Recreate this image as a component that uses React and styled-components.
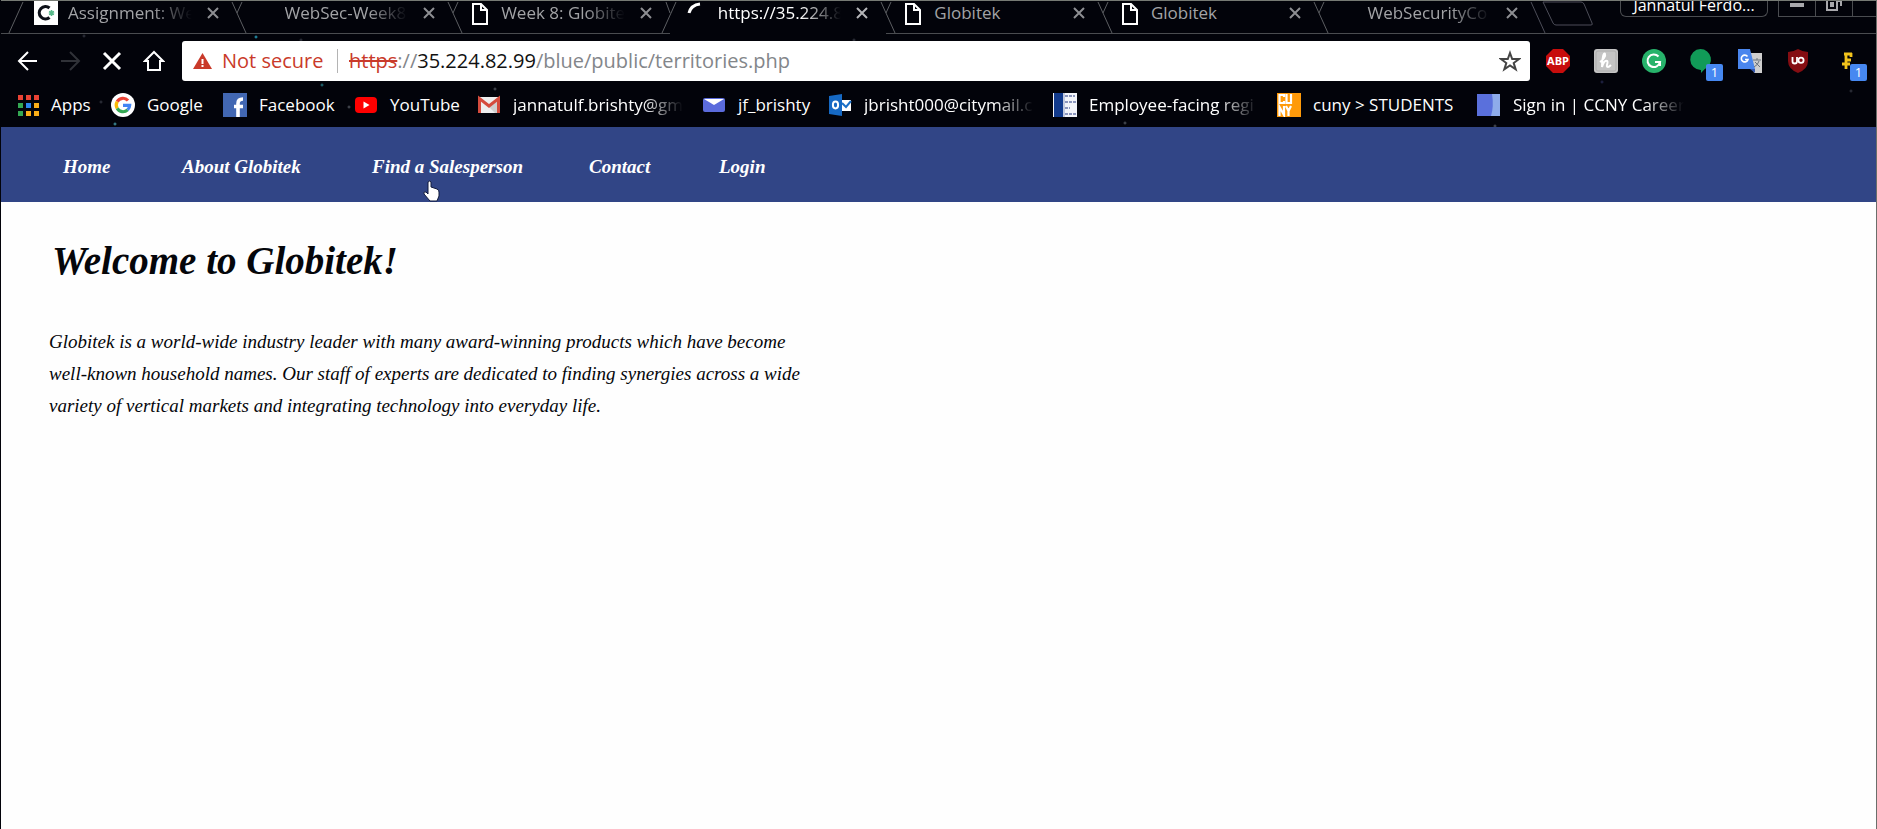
import React from "react";
import styled, { createGlobalStyle, css } from "styled-components";

const UI = `"Open Sans", "Noto Sans", sans-serif`;
const SCRIPT = `"Liberation Serif", serif`;

const Global = createGlobalStyle`
  * { box-sizing: border-box; }
  body { margin: 0; background: #fefefe; font-family: ${UI}; }
  button { font: inherit; color: inherit; background: none; border: 0; padding: 0; }
  a { color: inherit; text-decoration: none; }
`;

const Window = styled.div`
  min-height: 100vh;
  border-left: 1px solid #02030a;
  border-right: 1px solid #6b6f6b;
  overflow: hidden;
`;

const dot = (x, y, c) => `radial-gradient(circle 2px at ${x}px ${y}px, ${c} 0, transparent 100%)`;

const Chrome = styled.header`
  border-top: 1px solid #767a74;
  color: #fff;
  background: ${[
    dot(255, 36, "#2cc0e0"), dot(321, 84, "#2a8a96"), dot(114, 123, "#4fb6c4"), dot(494, 88, "#5b6068"),
    dot(348, 106, "#5b6068"), dot(100, 101, "#3a3d48"), dot(83, 35, "#3a3d48"), dot(300, 39, "#3a3d48"),
    dot(853, 39, "#3a3d48"), dot(1124, 122, "#5b6068"), dot(1494, 125, "#5b6068"), dot(1850, 90, "#3a3d48"),
    dot(1601, 81, "#2a2d58"),
  ].join(",")}, #02030a;
`;

const TabStrip = styled.div`
  display: flex;
  height: 33px;
  padding-left: 19px;
  background: linear-gradient(#4a4c50, #4a4c50) bottom left / 100% 1px no-repeat;
`;

const Tabs = styled.div`
  display: flex;
  flex: 0 1 1516px;
  min-width: 0;
`;

const Tab = styled.div`
  display: flex;
  flex: 1 1 0;
  min-width: 0;
  height: 33px;
  color: ${p => (p.$active ? "#fff" : "#a2a3a6")};
  background: ${p => (p.$active ? "#02030a" : "transparent")};
`;

const Slant = styled.svg`
  flex: none;
  width: 14px;
  height: 33px;
  overflow: visible;
  fill: none;
  stroke: #5c5e62;
`;

const TabIcon = styled.span`
  flex: none;
  width: 24px;
  height: 24px;
  svg { display: block; }
`;

const fade = css`
  mask-image: linear-gradient(90deg, #000 calc(100% - 40px), transparent);
`;

const TabTitle = styled.span`
  flex: 1 1 auto;
  min-width: 0;
  margin-left: 10px;
  overflow: hidden;
  white-space: nowrap;
  font-size: 17px;
  line-height: 24px;
  ${p => p.$fade && fade}
`;

const TabClose = styled.button`
  flex: none;
  width: 12px;
  height: 24px;
  margin: 0 18px 0 15px;
  color: ${p => (p.$active ? "#b4b5b8" : "#8d8e92")};
  svg { display: block; }
`;

const NewTab = styled.button`
  flex: none;
  width: 70px;
  height: 33px;
  svg { display: block; overflow: visible; }
`;

const WindowControls = styled.div`
  display: flex;
  align-items: flex-start;
  margin-left: auto;
`;

const Profile = styled.button`
  width: 148px;
  height: 16px;
  margin-right: 10px;
  border: 1px solid #4a4c50;
  border-top: 0;
  border-radius: 0 0 6px 6px;
  overflow: hidden;
  font-size: 16px;
  line-height: 16px;
  display: flex;
  align-items: flex-end;
  justify-content: center;
  span { display: block; line-height: 22px; }
`;

const ControlButton = styled.button`
  display: flex;
  justify-content: center;
  width: ${p => p.$w}px;
  height: 16px;
  border-left: 1px solid #4a4c50;
  border-bottom: 1px solid #4a4c50;
`;

const Toolbar = styled.div`
  display: flex;
  align-items: center;
  height: 54px;
  padding: 0 6px;
`;

const ToolButton = styled.button`
  display: grid;
  place-items: center;
  flex: none;
  width: 42px;
  height: 40px;
  color: ${p => (p.$dim ? "#303238" : "#fff")};
`;

const Address = styled.div`
  display: flex;
  align-items: center;
  flex: 1;
  min-width: 0;
  height: 40px;
  margin: 0 4px 0 7px;
  padding: 0 9px 0 11px;
  border-radius: 3px;
  background: #fff;
  font-size: 20px;
  line-height: 28px;
  white-space: nowrap;
`;

const NotSecure = styled.span`
  width: 115px;
  margin-left: 10px;
  color: #c93a2a;
`;

const Url = styled.span`
  flex: 1;
  padding-left: 11px;
  border-left: 1px solid #b4b4b4;
  line-height: 24px;
  color: #83868a;
  s { color: #c93a2a; }
  b { font-weight: 400; color: #111; }
`;

const Extensions = styled.div`
  display: flex;
`;

const Extension = styled.button`
  position: relative;
  display: grid;
  place-items: center;
  width: 48px;
  height: 40px;
`;

const Badge = styled.span`
  position: absolute;
  right: 3px;
  bottom: 0;
  width: 17px;
  height: 17px;
  border-radius: 2px;
  background: #4688f1;
  color: #fff;
  font-size: 13px;
  line-height: 17px;
  text-align: center;
`;

const Bookmarks = styled.nav`
  display: flex;
  height: 39px;
  padding-left: 14px;
  gap: 19px;
`;

const Bookmark = styled.a`
  display: flex;
  align-items: center;
  flex: none;
  height: 34px;
  svg { flex: none; margin-right: 12px; }
`;

const BookmarkLabel = styled.span`
  width: ${p => p.$w}px;
  overflow: ${p => (p.$fade ? "hidden" : "visible")};
  white-space: nowrap;
  font-size: 17px;
  line-height: 26px;
  ${p => p.$fade && fade}
`;

const SiteNav = styled.nav`
  display: flex;
  align-items: center;
  gap: 71px;
  height: 75px;
  padding: 4px 62px 0;
  background: #314586;
  color: #fff;
  font: italic bold 19px/32px ${SCRIPT};
`;

const NavLink = styled.a`
  position: relative;
  white-space: nowrap;
  width: ${p => p.$w}px;
`;

const Pointer = styled.svg`
  position: absolute;
  left: 50px;
  top: 29px;
`;

const Main = styled.main`
  padding: 33px 48px;
  color: #05060a;
  font-family: ${SCRIPT};
  font-style: italic;
`;

const Title = styled.h1`
  margin: 0;
  padding-left: 3px;
  font-size: 39px;
  line-height: 52px;
`;

const Intro = styled.p`
  max-width: 760px;
  margin: 39px 0 0;
  font-size: 19px;
  line-height: 32px;
`;

const FileIcon = () => (
  <svg width="24" height="24" viewBox="0 0 24 24" fill="none" stroke="#fff" strokeWidth="2">
    <path d="M6 3h8l6 6v14H6z M14 3v6h6" />
  </svg>
);

const CIcon = () => (
  <svg width="24" height="24" viewBox="0 0 24 24">
    <path fill="#fff" d="M0 0h24v24H0z" />
    <path d="M15.500 7A6.200 6.200 0 1 0 15.500 16.500" fill="none" stroke="#0c1018" strokeWidth="3.200" />
    <path d="M17.500 9v6M15 10.500l5 3M15 13.500l5-3" stroke="#58b98a" strokeWidth="1.600" />
  </svg>
);

const Spinner = () => (
  <svg width="24" height="24" viewBox="0 0 24 24" fill="none" stroke="#fff" strokeWidth="3">
    <path d="M5 12Q7 4 16 3" />
  </svg>
);

const TABS = [
  { title: "Assignment: We", icon: <CIcon />, fade: true },
  { title: "WebSec-Week8", fade: true },
  { title: "Week 8: Globite", icon: <FileIcon />, fade: true },
  { title: "https://35.224.8", icon: <Spinner />, fade: true, active: true },
  { title: "Globitek", icon: <FileIcon /> },
  { title: "Globitek", icon: <FileIcon /> },
  { title: "WebSecurityCo", fade: true },
];

const slantPath = i =>
  i === 0 ? "M3 1L-11 32" : i === 3 ? "M6 1L-8 32M-4 1L0 12" : "M-5 1L9 32M5 1L0 12";

const G = ({ size = 24 }) => (
  <svg width={size} height={size} viewBox="0 0 24 24">
    <circle cx="12" cy="12" r="12" fill="#fff" />
    <g fill="none" strokeWidth="3.200">
      <path d="M6.200 8.600A6.700 6.700 0 0 1 17 7.500" stroke="#ea4335" />
      <path d="M6.200 15.400A6.700 6.700 0 0 1 6.200 8.600" stroke="#fbbc05" />
      <path d="M16.600 16.900A6.700 6.700 0 0 1 6.200 15.400" stroke="#34a853" />
      <path d="M12 12.300H18.700A6.700 6.700 0 0 1 16.600 16.900" stroke="#4285f4" />
    </g>
  </svg>
);

const AppsIcon = () => (
  <svg width="24" height="24" viewBox="0 0 24 24">
    {["#ea4335", "#ea4335", "#ea4335", "#34a853", "#2a85f0", "#fbae17", "#34a853", "#fbae17", "#fbae17"].map((c, i) => (
      <rect key={i} x={3 + (i % 3) * 8} y={2 + Math.floor(i / 3) * 8} width="5" height="5" fill={c} />
    ))}
  </svg>
);

const BOOKMARKS = [
  { label: "Apps", w: 41, icon: <AppsIcon /> },
  { label: "Google", w: 57, icon: <G /> },
  {
    label: "Facebook", w: 76,
    icon: (
      <svg width="24" height="24" viewBox="0 0 24 24">
        <path fill="#4267b2" d="M0 0h24v24H0z" />
        <path d="M15 24V10.500Q15 6 20 6M11 13.500H20" stroke="#fff" strokeWidth="3.600" fill="none" />
      </svg>
    ),
  },
  {
    label: "YouTube", w: 68,
    icon: (
      <svg width="24" height="24" viewBox="0 0 24 24">
        <rect x="1" y="4" width="22" height="16" rx="4" fill="#f00" />
        <path d="M9.500 8.500v7l6-3.500z" fill="#fff" />
      </svg>
    ),
  },
  {
    label: "jannatulf.brishty@gm", w: 170, fade: true,
    icon: (
      <svg width="24" height="24" viewBox="0 0 24 24">
        <path fill="#eee" d="M1 4h22v16H1z" />
        <path fill="#cfcfcf" d="M12 14l8-7v13h-2z" />
        <path d="M2.500 20V5.500L12 13l9.500-7.500V20" fill="none" stroke="#d54b3d" strokeWidth="3" />
      </svg>
    ),
  },
  {
    label: "jf_brishty", w: 71,
    icon: (
      <svg width="24" height="24" viewBox="0 0 24 24">
        <rect x="1" y="5" width="22" height="14" rx="2" fill="#5b6bdc" />
        <path d="M2 6h20l-10 6z" fill="#fff" />
      </svg>
    ),
  },
  {
    label: "jbrisht000@citymail.c", w: 170, fade: true,
    icon: (
      <svg width="24" height="24" viewBox="0 0 24 24">
        <path fill="#fff" d="M12 7h11v11H12z" />
        <path d="M14 10l4 4 5-6" fill="none" stroke="#1a70c8" strokeWidth="2" />
        <path fill="#1669c4" d="M1 3l13-2v22L1 21z" />
        <ellipse cx="7.500" cy="12" rx="2.600" ry="3.400" fill="none" stroke="#fff" strokeWidth="2" />
      </svg>
    ),
  },
  {
    label: "Employee-facing regi", w: 169, fade: true,
    icon: (
      <svg width="24" height="24" viewBox="0 0 24 24">
        <path fill="#f4f5fa" d="M0 0h24v24H0z" />
        <path fill="#123a8c" d="M1 0h9v24H1z" />
        <path fill="#c3cade" d="M10 0h2v24h-2z" />
        <path d="M12 3h7m1 0h2M12 9h12M12 15h5M12 21h12" stroke="#8c96bd" strokeWidth="2" strokeDasharray="3 1" />
      </svg>
    ),
  },
  {
    label: "cuny > STUDENTS", w: 145,
    icon: (
      <svg width="24" height="24" viewBox="0 0 24 24">
        <path fill="#ff9a0a" d="M0 0h24v24H0z" />
        <g fill="none" stroke="#fff" strokeWidth="2.200">
          <path d="M7 4V2H2.500v8H7V8M9.500 1v9H14V1M2.500 23v-9L7 22v-9M9 13l2.500 5L14 13M11.500 18v5" />
        </g>
      </svg>
    ),
  },
  {
    label: "Sign in | CCNY Career", w: 171, fade: true,
    icon: (
      <svg width="24" height="24" viewBox="0 0 24 24">
        <path fill="#5a70dc" d="M0 1h23v22H0z" />
        <path fill="#8eabea" d="M15 1h8v22h-9q3-10 1-22z" />
      </svg>
    ),
  },
];

const EXTENSIONS = [
  {
    name: "Adblock Plus",
    icon: (
      <svg width="24" height="24" viewBox="0 0 24 24">
        <path d="M7 0h10l7 7v10l-7 7H7l-7-7V7z" fill="#c70d0c" />
        <text x="12" y="16" textAnchor="middle" fill="#fff" fontSize="11" fontWeight="700" fontFamily="Open Sans">ABP</text>
      </svg>
    ),
  },
  {
    name: "Honey",
    icon: (
      <svg width="24" height="24" viewBox="0 0 24 24">
        <rect width="24" height="24" rx="3" fill="#c4c4c4" />
        <rect x="2" y="2" width="20" height="20" rx="2" fill="none" stroke="#aeaeae" />
        <path d="M6 13c3-2 6-6 5-8s-3 3-3 13c1-4 3-7 5-6s-2 6 1 6c1 0 2-1 3-2" fill="none" stroke="#fff" strokeWidth="2" />
      </svg>
    ),
  },
  {
    name: "Grammarly",
    icon: (
      <svg width="24" height="24" viewBox="0 0 24 24">
        <circle cx="12" cy="12" r="12" fill="#27b36b" />
        <path d="M16.500 7.500A6.300 6.300 0 1 0 18 13h-5M18 12v5" fill="none" stroke="#fff" strokeWidth="2" />
      </svg>
    ),
  },
  {
    name: "Hangouts", badge: "1",
    icon: (
      <svg width="24" height="24" viewBox="0 0 24 24">
        <path d="M10.500 0a10.500 10.500 0 0 1 4 20.200L11 24v-3A10.500 10.500 0 0 1 10.500 0z" fill="#119b58" />
      </svg>
    ),
  },
  {
    name: "Google Translate",
    icon: (
      <svg width="24" height="24" viewBox="0 0 24 24">
        <path d="M11 4h13v20h-8z" fill="#cfcfcf" />
        <path d="M0 0h12l5 20H0z" fill="#4a86ee" />
        <path d="M12 20h5v4z" fill="#3456ad" />
        <path d="M9.500 7.500A3.400 3.400 0 1 0 10 10.500H7" fill="none" stroke="#fff" strokeWidth="1.600" />
        <path d="M15 11h8M19 9v2M21 12q-1 4-5 6M17 13l5 5" fill="none" stroke="#68727c" />
      </svg>
    ),
  },
  {
    name: "uBlock Origin",
    icon: (
      <svg width="24" height="24" viewBox="0 0 24 24">
        <path d="M12 0q5 3 10 3v9q0 8-10 12Q2 20 2 12V3q5 0 10-3z" fill="#850d12" />
        <path d="M6.500 8v4.500q0 2 2.200 2t2.300-2V8" fill="none" stroke="#fff" strokeWidth="1.800" />
        <circle cx="15" cy="11.200" r="2.600" fill="none" stroke="#fff" strokeWidth="1.800" />
      </svg>
    ),
  },
  {
    name: "Fakespot", badge: "1",
    icon: (
      <svg width="24" height="24" viewBox="0 0 24 24">
        <path d="M12 20V5M10 5h8M17 4v4M12 11h5M8 15h8" fill="none" stroke="#f2c31c" strokeWidth="2.800" />
      </svg>
    ),
  },
];

export default function App() {
  return (
    <Window>
      <Global />
      <Chrome>
        <TabStrip>
          <Tabs>
            {TABS.map((t, i) => (
              <Tab key={i} $active={t.active}>
                <Slant><path d={slantPath(i)} /></Slant>
                <TabIcon>{t.icon}</TabIcon>
                <TabTitle $fade={t.fade}>{t.title}</TabTitle>
                <TabClose $active={t.active} aria-label={`Close ${t.title}`}>
                  <svg width="12" height="24" viewBox="0 0 12 24" stroke="currentColor" strokeWidth="2">
                    <path d="M1 7l10 10M11 7L1 17" />
                  </svg>
                </TabClose>
              </Tab>
            ))}
          </Tabs>
          <NewTab aria-label="New tab">
            <svg width="70" height="33" fill="none" stroke="#4c4d58">
              <path d="M-5 1L9 32M7 1h38q2 0 3 2l8 19q1 2-1 2H20q-2 0-3-2z" />
            </svg>
          </NewTab>
          <WindowControls>
            <Profile><span>Jannatul Ferdo...</span></Profile>
            <ControlButton $w={37} aria-label="Minimize">
              <svg width="18" height="12"><rect x="2" y="2" width="14" height="4" fill="#a8a8ac" /></svg>
            </ControlButton>
            <ControlButton $w={37} aria-label="Restore">
              <svg width="18" height="12" fill="none" stroke="#a8a8ac" strokeWidth="2">
                <path d="M2 0v9h10V0M6 2h2v3H6zM13 0h3v5" />
              </svg>
            </ControlButton>
            <ControlButton $w={24} aria-label="Close window" />
          </WindowControls>
        </TabStrip>

        <Toolbar>
          <ToolButton aria-label="Back">
            <svg width="22" height="22" viewBox="0 0 22 22" fill="none" stroke="currentColor" strokeWidth="2">
              <path d="M20 11H3M11 2l-9 9 9 9" />
            </svg>
          </ToolButton>
          <ToolButton aria-label="Forward" $dim>
            <svg width="22" height="22" viewBox="0 0 22 22" fill="none" stroke="currentColor" strokeWidth="2">
              <path d="M2 11h17M11 2l9 9-9 9" />
            </svg>
          </ToolButton>
          <ToolButton aria-label="Stop">
            <svg width="22" height="22" viewBox="0 0 22 22" fill="none" stroke="currentColor" strokeWidth="3">
              <path d="M3 3l16 16M19 3L3 19" />
            </svg>
          </ToolButton>
          <ToolButton aria-label="Home">
            <svg width="22" height="22" viewBox="0 0 22 22" fill="none" stroke="currentColor" strokeWidth="2">
              <path d="M11 2l9 9h-3v9H5v-9H2z" />
            </svg>
          </ToolButton>
          <Address>
            <svg width="19" height="18" viewBox="0 0 19 18">
              <path d="M9.500 1L19 17H0z" fill="#c93a2a" />
              <path d="M9.500 7v5M9.500 13v2" stroke="#fff" strokeWidth="2" />
            </svg>
            <NotSecure>Not secure</NotSecure>
            <Url><s>https</s>://<b>35.224.82.99</b>/blue/public/territories.php</Url>
            <svg width="22" height="22" viewBox="0 0 22 22" fill="none" stroke="#444" strokeWidth="2">
              <path d="M11 3l2.200 6H20l-5.300 4 2 6.400-5.700-3.900-5.700 3.900 2-6.400L2 9h6.800z" />
            </svg>
          </Address>
          <Extensions>
            {EXTENSIONS.map(e => (
              <Extension key={e.name} aria-label={e.name}>
                {e.icon}
                {e.badge && <Badge>{e.badge}</Badge>}
              </Extension>
            ))}
          </Extensions>
        </Toolbar>

        <Bookmarks>
          {BOOKMARKS.map(b => (
            <Bookmark key={b.label} href="#">
              {b.icon}
              <BookmarkLabel $w={b.w} $fade={b.fade}>{b.label}</BookmarkLabel>
            </Bookmark>
          ))}
        </Bookmarks>
      </Chrome>

      <SiteNav>
        <NavLink href="#" $w={48}>Home</NavLink>
        <NavLink href="#" $w={119}>About Globitek</NavLink>
        <NavLink href="#" $w={146}>
          Find a Salesperson
          <Pointer width="18" height="22" viewBox="0 0 18 22" aria-hidden="true">
            <path
              d="M6 2q2-2 3 0v5l6 2q2 1 2 3v4l-2 5H8l-6-7q-1-3 2-2l2 2z"
              fill="#fff" stroke="#111a3c"
            />
          </Pointer>
        </NavLink>
        <NavLink href="#" $w={59}>Contact</NavLink>
        <NavLink href="#" $w={45}>Login</NavLink>
      </SiteNav>

      <Main>
        <Title>Welcome to Globitek!</Title>
        <Intro>
          Globitek is a world-wide industry leader with many award-winning products which have become
          well-known household names. Our staff of experts are dedicated to finding synergies across a wide
          variety of vertical markets and integrating technology into everyday life.
        </Intro>
      </Main>
    </Window>
  );
}
